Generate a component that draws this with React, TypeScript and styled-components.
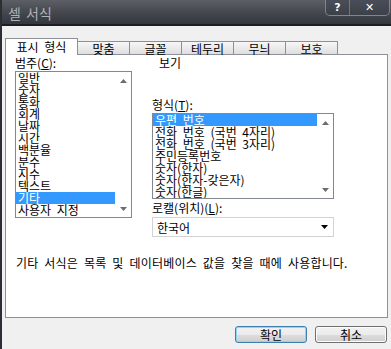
import * as React from 'react';
import styled, { createGlobalStyle } from 'styled-components';

const FONT = `"Noto Sans CJK KR", "Noto Sans", sans-serif`;

const CATEGORIES = [
  '일반',
  '숫자',
  '통화',
  '회계',
  '날짜',
  '시간',
  '백분율',
  '분수',
  '지수',
  '텍스트',
  '기타',
  '사용자 지정',
];

const FORMATS = [
  '우편 번호',
  '전화 번호 (국번 4자리)',
  '전화 번호 (국번 3자리)',
  '주민등록번호',
  '숫자(한자)',
  '숫자(한자-갖은자)',
  '숫자(한글)',
];

const TABS = ['표시 형식', '맞춤', '글꼴', '테두리', '무늬', '보호'];

const GlobalStyle = createGlobalStyle`
  html, body {
    margin: 0;
    padding: 0;
    background: #f0f0f0;
  }
  * {
    box-sizing: border-box;
  }
`;

const Arrow = ({ up }: { up?: boolean }) => (
  <svg width="7" height="4" viewBox="0 0 7 4">
    <path d={up ? 'M0 4 L3.5 0 L7 4 Z' : 'M0 0 L7 0 L3.5 4 Z'} fill="currentColor" />
  </svg>
);

const ListBox = ({
  items,
  selected,
  height,
  width,
}: {
  items: string[];
  selected: number;
  height: number;
  width: number;
}) => (
  <List style={{ height, width }}>
    <Items>
      {items.map((item, i) => (
        <Item key={item} selected={i === selected ? 1 : 0}>
          {item}
        </Item>
      ))}
    </Items>
    <ScrollBar>
      <Arrow up />
      <Arrow />
    </ScrollBar>
  </List>
);

const Label = ({ text, hotkey }: { text: string; hotkey: string }) => (
  <FieldLabel>
    {text}(<u>{hotkey}</u>):
  </FieldLabel>
);

export default function App() {
  return (
    <>
      <GlobalStyle />
      <Window>
        <TitleBar>
          <Title>셀 서식</Title>
          <Caption>
            <CaptionButton>?</CaptionButton>
            <CaptionButton wide={1}>✕</CaptionButton>
          </Caption>
        </TitleBar>
        <Body>
          <TabRow>
            {TABS.map((tab, i) => (
              <Tab key={tab} active={i === 0 ? 1 : 0}>
                {tab}
              </Tab>
            ))}
          </TabRow>
          <Panel>
            <Columns>
              <Column>
                <Label text="범주" hotkey="C" />
                <ListBox items={CATEGORIES} selected={10} height={147} width={117} />
              </Column>
              <Column>
                <PreviewLabel>보기</PreviewLabel>
                <Preview />
                <Label text="형식" hotkey="T" />
                <ListBox items={FORMATS} selected={0} height={86} width={182} />
                <Label text="로캘(위치)" hotkey="L" />
                <Combo>
                  <span>한국어</span>
                  <ComboArrow>
                    <Arrow />
                  </ComboArrow>
                </Combo>
              </Column>
            </Columns>
            <Description>
              기타 서식은 목록 및 데이터베이스 값을 찾을 때에 사용합니다.
            </Description>
          </Panel>
          <Footer>
            <Button primary={1}>확인</Button>
            <Button>취소</Button>
          </Footer>
        </Body>
      </Window>
    </>
  );
}

const Window = styled.div`
  width: 391px;
  height: 349px;
  display: flex;
  flex-direction: column;
  background: #f0f0f0;
  border-left: 2px solid #2b2e35;
  font-family: ${FONT};
  font-size: 12px;
  word-spacing: 3px;
  color: #000;
  overflow: hidden;
`;

const TitleBar = styled.div`
  height: 26px;
  display: flex;
  justify-content: space-between;
  align-items: flex-start;
  background: linear-gradient(to bottom, #5c5f66 0%, #45484f 50%, #34373d 100%);
  border-bottom: 2px solid #1c1d21;
  padding-right: 1px;
`;

const Title = styled.div`
  padding: 6px 0 0 6px;
  font-size: 14px;
  line-height: 15px;
  word-spacing: 2px;
  color: #aeb1b8;
`;

const Caption = styled.div`
  display: flex;
  height: 16px;
  border: 1px solid rgba(200, 205, 215, 0.45);
  border-top: none;
  border-radius: 0 0 5px 5px;
  background: linear-gradient(to bottom, #4a4e58, #3c4049);
  overflow: hidden;
`;

const CaptionButton = styled.div<{ wide?: number }>`
  width: ${p => (p.wide ? 40 : 23)}px;
  display: flex;
  align-items: center;
  justify-content: center;
  color: #fff;
  font-family: "DejaVu Sans", sans-serif;
  font-weight: 700;
  font-size: 11px;
  & + & {
    border-left: 1px solid rgba(200, 205, 215, 0.35);
  }
`;

const Body = styled.div`
  flex: 1;
  display: flex;
  flex-direction: column;
  padding: 12px 1px 0 3px;
`;

const TabRow = styled.div`
  display: flex;
  align-items: flex-end;
  height: 17px;
  margin-bottom: -1px;
`;

const Tab = styled.div<{ active: number }>`
  position: relative;
  z-index: ${p => (p.active ? 2 : 1)};
  width: ${p => (p.active ? 73 : 53)}px;
  height: ${p => (p.active ? 17 : 14)}px;
  display: flex;
  align-items: center;
  justify-content: center;
  padding-top: ${p => (p.active ? 0 : 1)}px;
  border: 1px solid #8d9099;
  border-bottom: ${p => (p.active ? 'none' : '1px solid #8d9099')};
  background: ${p => (p.active ? '#fff' : 'linear-gradient(to bottom, #f7f7f7, #dedede)')};
  font-size: 12px;
  line-height: 12px;
  & + & {
    margin-left: ${p => (p.active ? 0 : -1)}px;
  }
`;

const Panel = styled.div`
  width: 383px;
  height: 264px;
  display: flex;
  flex-direction: column;
  background: #fff;
  border: 1px solid #8d9099;
  padding: 0 9px;
`;

const Columns = styled.div`
  display: flex;
  gap: 20px;
`;

const Column = styled.div`
  display: flex;
  flex-direction: column;
`;

const FieldLabel = styled.div`
  height: 16px;
  line-height: 14px;
  padding-top: 1px;
  white-space: nowrap;
  u {
    text-underline-offset: 1px;
  }
`;

const PreviewLabel = styled(FieldLabel)`
  padding-left: 7px;
`;

const Preview = styled.div`
  height: 26px;
`;

const List = styled.div`
  display: flex;
  border: 1px solid #828790;
  background: #fff;
  overflow: hidden;
  margin-bottom: 1px;
`;

const Items = styled.div`
  flex: 1;
  display: flex;
  flex-direction: column;
  overflow: hidden;
`;

const Item = styled.div<{ selected: number }>`
  height: 12px;
  line-height: 12px;
  padding-left: 2px;
  white-space: nowrap;
  flex-shrink: 0;
  background: ${p => (p.selected ? '#3399ff' : 'transparent')};
  color: ${p => (p.selected ? '#fff' : '#000')};
`;

const ScrollBar = styled.div`
  width: 16px;
  display: flex;
  flex-direction: column;
  justify-content: space-between;
  align-items: center;
  padding: 7px 0 6px;
  color: #6d6d6d;
`;

const Combo = styled.div`
  width: 182px;
  height: 20px;
  margin-top: 1px;
  display: flex;
  align-items: center;
  justify-content: space-between;
  padding: 0 5px 0 4px;
  border: 1px solid #d3d3d3;
  background: #fff;
`;

const ComboArrow = styled.div`
  color: #000;
  display: flex;
`;

const Description = styled.div`
  margin-top: 19px;
  line-height: 14px;
  padding-left: 1px;
  letter-spacing: 0.2px;
  white-space: nowrap;
`;

const Footer = styled.div`
  display: flex;
  justify-content: flex-end;
  gap: 8px;
  padding: 8px 3px 0 0;
`;

const Button = styled.div<{ primary?: number }>`
  width: 72px;
  height: 17px;
  display: flex;
  align-items: center;
  justify-content: center;
  border: 1px solid ${p => (p.primary ? '#3c7fb1' : '#707070')};
  border-radius: 3px;
  background: linear-gradient(to bottom, #f2f2f2 0%, #ebebeb 50%, #dddddd 51%, #cfcfcf 100%);
  box-shadow: ${p => (p.primary ? 'inset 0 0 0 1px #8fd3f6' : 'inset 0 0 0 1px #fcfcfc')};
  font-size: 12px;
  line-height: 12px;
`;
